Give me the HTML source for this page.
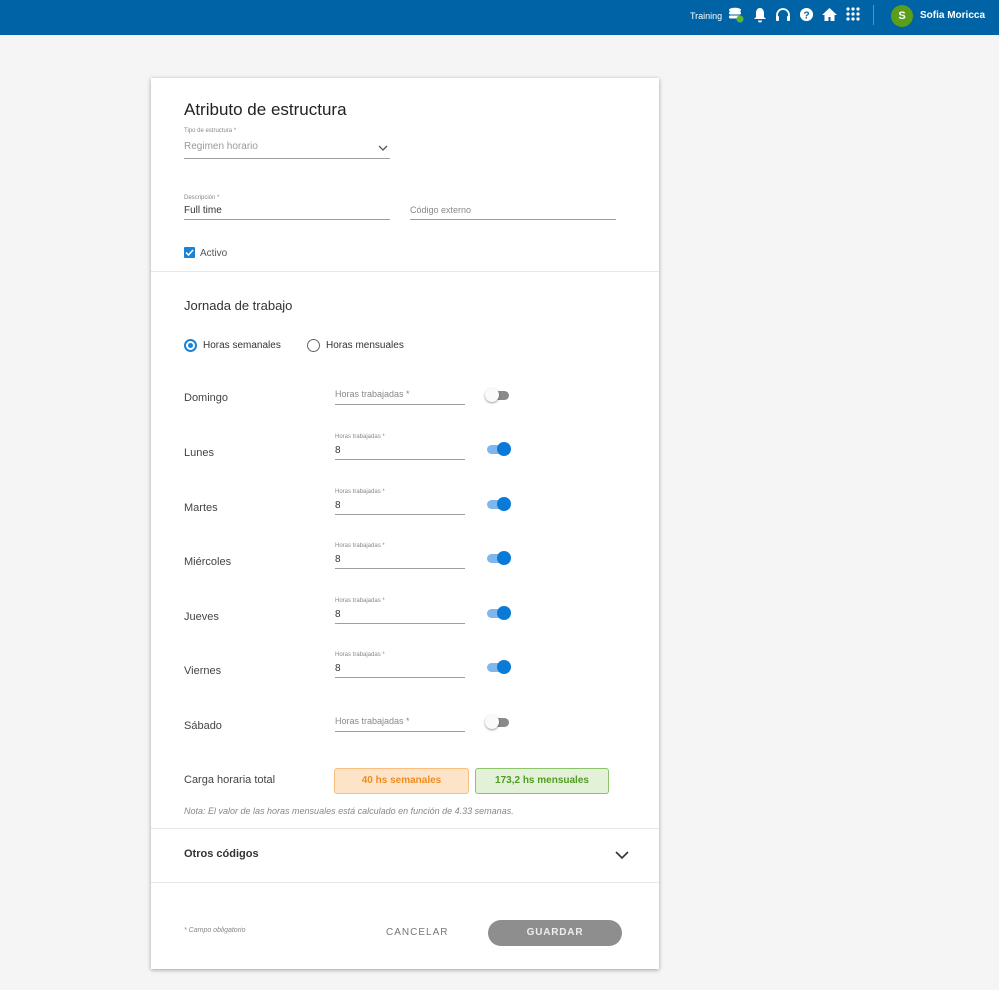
<!DOCTYPE html>
<html><head><meta charset="utf-8"><style>
*{box-sizing:border-box;margin:0;padding:0}
body{width:999px;height:990px;background:#f5f5f5;font-family:"Liberation Sans",sans-serif;position:relative;overflow:hidden;color:#333}
.a{position:absolute}
.hdr{left:0;top:0;width:999px;height:35px;background:#0063a6}
.card{left:151px;top:78px;width:508px;height:891px;background:#fff;box-shadow:0 1px 4px rgba(0,0,0,.35)}
.line{height:1px;background:#9e9e9e}
.sep{height:1px;background:#e8e8e8;left:151px;width:508px}
.lbl{font-size:11px;color:#444}
.small{font-size:6px;color:#888}
.tg{width:26px;height:14px}
.tg .tr{position:absolute;left:2px;top:3px;width:22px;height:9px;border-radius:5px}
.tg .kn{position:absolute;top:0;width:14px;height:14px;border-radius:50%}
.off .tr{background:#8a8a8a}.off .kn{left:0;background:#fafafa;box-shadow:0 1px 2px rgba(0,0,0,.4)}
.on .tr{background:#7fb6ee}.on .kn{left:12px;background:#0a7ad8}
</style></head><body>
<div class="a hdr"></div>
<div class="a" style="left:690px;top:11px;font-size:9px;color:#fff">Training</div>
<svg class="a" style="left:727px;top:7px" width="18" height="16" viewBox="0 0 18 16"><ellipse cx="8" cy="3" rx="6" ry="2.3" fill="#fff"/><rect x="2" y="4.5" width="12" height="3" rx="1.2" fill="#fff"/><rect x="2" y="8.5" width="12" height="3" rx="1.2" fill="#fff"/><circle cx="13" cy="12" r="3.5" fill="#5cb82e"/></svg>
<svg class="a" style="left:753px;top:7px" width="14" height="16" viewBox="0 0 14 16"><path d="M7 1C4 1 3 4 3 6v4L1 12h12l-2-2V6c0-2-1-5-4-5z M5 13.5a2 2 0 004 0z" fill="#fff"/></svg>
<svg class="a" style="left:775px;top:7px" width="16" height="16" viewBox="0 0 16 16"><path d="M2 10V8a6 6 0 0112 0v2" stroke="#fff" stroke-width="1.8" fill="none"/><rect x="1" y="9" width="3" height="5" rx="1" fill="#fff"/><rect x="12" y="9" width="3" height="5" rx="1" fill="#fff"/></svg>
<svg class="a" style="left:799px;top:7px" width="15" height="15" viewBox="0 0 16 16"><circle cx="8" cy="8" r="7" fill="#fff"/><text x="8" y="12" font-size="11" font-weight="bold" text-anchor="middle" fill="#0063a6" font-family="Liberation Sans">?</text></svg>
<svg class="a" style="left:821px;top:7px" width="17" height="15" viewBox="0 0 17 15"><path d="M8.5 1L1 8h2.5v6h4v-4h2v4h4V8H16z" fill="#fff"/></svg>
<svg class="a" style="left:846px;top:7px" width="14" height="14" viewBox="0 0 14 14" fill="#fff"><circle cx="2" cy="2" r="1.6"/><circle cx="7" cy="2" r="1.6"/><circle cx="12" cy="2" r="1.6"/><circle cx="2" cy="7" r="1.6"/><circle cx="7" cy="7" r="1.6"/><circle cx="12" cy="7" r="1.6"/><circle cx="2" cy="12" r="1.6"/><circle cx="7" cy="12" r="1.6"/><circle cx="12" cy="12" r="1.6"/></svg>
<div class="a" style="left:873px;top:5px;width:1px;height:20px;background:#5d8fbf"></div>
<div class="a" style="left:891px;top:5px;width:22px;height:22px;border-radius:50%;background:#5a9e1a;color:#fff;font-size:11px;font-weight:bold;text-align:center;line-height:22px">S</div>
<div class="a" style="left:920px;top:10px;font-size:10px;color:#fff;font-weight:bold">Sofia Moricca</div>

<div class="a card"></div>
<div class="a" style="left:184px;top:100px;font-size:17px;color:#222">Atributo de estructura</div>
<div class="a small" style="left:184px;top:128px">Tipo de estructura *</div>
<div class="a" style="left:184px;top:141px;font-size:10px;color:#999">Regimen horario</div>
<svg class="a" style="left:378px;top:144px" width="10" height="8"><path d="M1 2l4 4 4-4" stroke="#555" stroke-width="1.3" fill="none"/></svg>
<div class="a line" style="left:184px;top:158px;width:206px"></div>
<div class="a small" style="left:184px;top:195px">Descripción *</div>
<div class="a" style="left:184px;top:205px;font-size:10px;color:#333">Full time</div>
<div class="a line" style="left:184px;top:219px;width:206px"></div>
<div class="a" style="left:410px;top:205px;font-size:9px;color:#888">Código externo</div>
<div class="a line" style="left:410px;top:219px;width:206px"></div>
<div class="a" style="left:184px;top:247px;width:11px;height:11px;background:#1a83d6;border-radius:1px"></div>
<svg class="a" style="left:184px;top:247px" width="11" height="11"><path d="M2 5.5l2.5 2.5 4.5-5" stroke="#fff" stroke-width="1.5" fill="none"/></svg>
<div class="a" style="left:200px;top:248px;font-size:10px;color:#555">Activo</div>
<div class="a sep" style="top:271px"></div>

<div class="a" style="left:184px;top:298px;font-size:13px;color:#333">Jornada de trabajo</div>
<div class="a" style="left:184px;top:339px;width:13px;height:13px;border:2px solid #1a83d6;border-radius:50%"></div>
<div class="a" style="left:188px;top:343px;width:5px;height:5px;background:#1a83d6;border-radius:50%"></div>
<div class="a" style="left:203px;top:340px;font-size:10px;color:#333">Horas semanales</div>
<div class="a" style="left:307px;top:339px;width:13px;height:13px;border:1.5px solid #666;border-radius:50%"></div>
<div class="a" style="left:326px;top:340px;font-size:10px;color:#333">Horas mensuales</div>

<!-- rows -->
<div class="a lbl" style="left:184px;top:392px">Domingo</div>
<div class="a" style="left:335px;top:389px;font-size:9px;color:#888">Horas trabajadas *</div>
<div class="a line" style="left:335px;top:404px;width:130px"></div>
<div class="a tg off" style="left:485px;top:388px"><div class="tr"></div><div class="kn"></div></div>

<div class="a lbl" style="left:184px;top:447px">Lunes</div>
<div class="a small" style="left:335px;top:434px">Horas trabajadas *</div>
<div class="a" style="left:335px;top:445px;font-size:10px">8</div>
<div class="a line" style="left:335px;top:459px;width:130px"></div>
<div class="a tg on" style="left:485px;top:442px"><div class="tr"></div><div class="kn"></div></div>

<div class="a lbl" style="left:184px;top:502px">Martes</div>
<div class="a small" style="left:335px;top:489px">Horas trabajadas *</div>
<div class="a" style="left:335px;top:500px;font-size:10px">8</div>
<div class="a line" style="left:335px;top:514px;width:130px"></div>
<div class="a tg on" style="left:485px;top:497px"><div class="tr"></div><div class="kn"></div></div>

<div class="a lbl" style="left:184px;top:556px">Miércoles</div>
<div class="a small" style="left:335px;top:543px">Horas trabajadas *</div>
<div class="a" style="left:335px;top:554px;font-size:10px">8</div>
<div class="a line" style="left:335px;top:568px;width:130px"></div>
<div class="a tg on" style="left:485px;top:551px"><div class="tr"></div><div class="kn"></div></div>

<div class="a lbl" style="left:184px;top:611px">Jueves</div>
<div class="a small" style="left:335px;top:598px">Horas trabajadas *</div>
<div class="a" style="left:335px;top:609px;font-size:10px">8</div>
<div class="a line" style="left:335px;top:623px;width:130px"></div>
<div class="a tg on" style="left:485px;top:606px"><div class="tr"></div><div class="kn"></div></div>

<div class="a lbl" style="left:184px;top:665px">Viernes</div>
<div class="a small" style="left:335px;top:652px">Horas trabajadas *</div>
<div class="a" style="left:335px;top:663px;font-size:10px">8</div>
<div class="a line" style="left:335px;top:677px;width:130px"></div>
<div class="a tg on" style="left:485px;top:660px"><div class="tr"></div><div class="kn"></div></div>

<div class="a lbl" style="left:184px;top:720px">Sábado</div>
<div class="a" style="left:335px;top:716px;font-size:9px;color:#888">Horas trabajadas *</div>
<div class="a line" style="left:335px;top:731px;width:130px"></div>
<div class="a tg off" style="left:485px;top:715px"><div class="tr"></div><div class="kn"></div></div>

<div class="a lbl" style="left:184px;top:774px">Carga horaria total</div>
<div class="a" style="left:334px;top:768px;width:135px;height:26px;background:#fde3c8;border:1px solid #f9bf80;border-radius:3px;color:#f08c1e;font-size:10px;font-weight:bold;text-align:center;line-height:24px">40 hs semanales</div>
<div class="a" style="left:475px;top:768px;width:134px;height:26px;background:#e3f1d8;border:1px solid #8cc36a;border-radius:3px;color:#4f9c22;font-size:10px;font-weight:bold;text-align:center;line-height:24px">173,2 hs mensuales</div>
<div class="a" style="left:184px;top:806px;font-size:9px;color:#888;font-style:italic">Nota: El valor de las horas mensuales está calculado en función de 4.33 semanas.</div>
<div class="a sep" style="top:828px"></div>
<div class="a" style="left:184px;top:848px;font-size:11px;font-weight:bold;color:#333">Otros códigos</div>
<svg class="a" style="left:615px;top:850px" width="14" height="10"><path d="M1 2l6 6 6-6" stroke="#333" stroke-width="1.6" fill="none"/></svg>
<div class="a sep" style="top:882px"></div>
<div class="a" style="left:184px;top:927px;font-size:7px;color:#888;font-style:italic">* Campo obligatorio</div>
<div class="a" style="left:386px;top:927px;font-size:10px;color:#777;letter-spacing:1px">CANCELAR</div>
<div class="a" style="left:488px;top:920px;width:134px;height:26px;background:#8e8e8e;border-radius:13px;color:#eee;font-size:10px;font-weight:bold;text-align:center;line-height:26px;letter-spacing:.8px">GUARDAR</div>
</body></html>
